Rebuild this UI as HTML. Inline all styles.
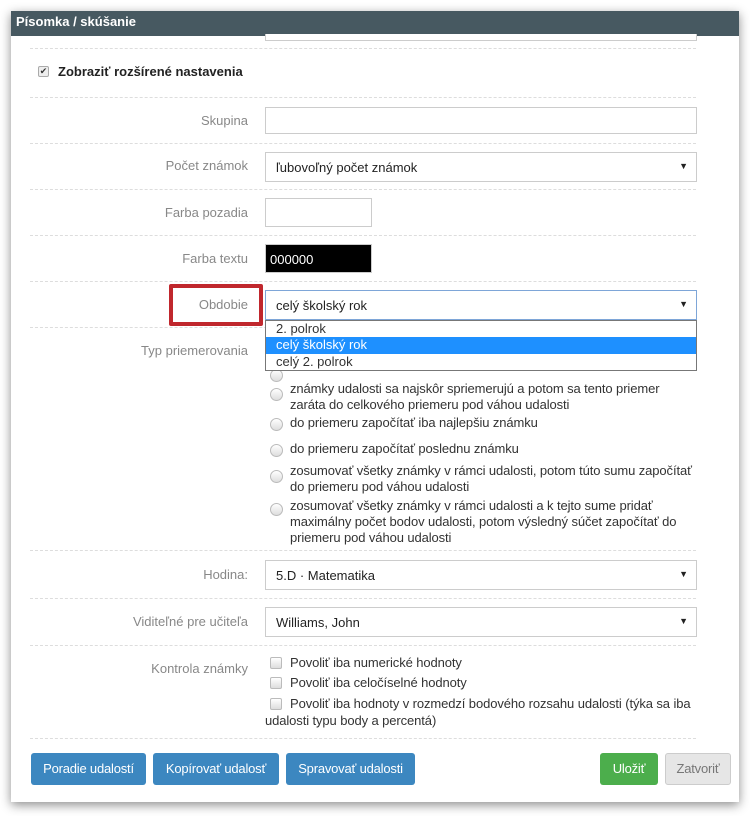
<!DOCTYPE html>
<html><head><meta charset="utf-8"><style>
*{box-sizing:border-box}
body{margin:0;width:750px;height:816px;background:#fff;font-family:"Liberation Sans",Arial,sans-serif;font-size:13px;color:#333;position:relative;overflow:hidden}
.modal{position:absolute;left:11px;top:11px;width:728px;height:791px;background:#fff;box-shadow:0 3px 10px rgba(0,0,0,.45)}
.hdr{position:absolute;left:11px;top:11px;width:728px;height:25px;background:#475961;color:#fff;font-weight:bold;font-size:13px;padding:3px 5px}
.a{position:absolute}
.sep{position:absolute;left:30px;width:666px;border-top:1px dashed #ddd;height:0}
.lbl{position:absolute;right:502px;color:#888;text-align:right;white-space:nowrap}
.in{position:absolute;border:1px solid #ccc;background:#fff}
.sel{position:absolute;left:265px;width:432px;height:30px;border:1px solid #ccc;background:#fff;padding:7px 10px;color:#222}
.sel:after{content:"▼";position:absolute;right:8px;top:8px;font-size:9px}
.rad{position:absolute;left:270px;width:13px;height:13px;border-radius:50%;border:1px solid #bbb;background:linear-gradient(#fff,#ddd)}
.cb{position:absolute;left:270px;width:12px;height:12px;border-radius:2px;border:1px solid #bbb;background:linear-gradient(#fff,#ddd)}
.t{position:absolute;left:290px;color:#333;line-height:16px;white-space:nowrap;letter-spacing:-0.1px}
.btn{position:absolute;top:753px;height:32px;color:#fff;background:#3c87c0;border-radius:3px;text-align:center;line-height:32px;font-size:13px;letter-spacing:-0.2px}
</style></head><body>
<div class="modal"></div>
<div class="hdr">Písomka / skúšanie</div>
<div class="in" style="left:265px;top:34px;width:432px;height:7px;border-top:none"></div>
<div class="sep" style="top:48px"></div>
<div class="a" style="left:38px;top:66px;width:11px;height:11px;border:1px solid #aaa;border-radius:2px;background:#eee;font-size:9px;line-height:9px;text-align:center">✔</div>
<div class="a" style="left:58px;top:64px;font-weight:bold;color:#222">Zobraziť rozšírené nastavenia</div>
<div class="sep" style="top:97px"></div>
<div class="lbl" style="top:113px">Skupina</div>
<div class="in" style="left:265px;top:107px;width:432px;height:27px"></div>
<div class="sep" style="top:143px"></div>
<div class="lbl" style="top:158px">Počet známok</div>
<div class="sel" style="top:152px;height:30px">ľubovoľný počet známok</div>
<div class="sep" style="top:189px"></div>
<div class="lbl" style="top:205px">Farba pozadia</div>
<div class="in" style="left:265px;top:198px;width:107px;height:29px"></div>
<div class="sep" style="top:235px"></div>
<div class="lbl" style="top:251px">Farba textu</div>
<div class="in" style="left:265px;top:244px;width:107px;height:29px;background:#000;color:#fff;padding:7px 4px">000000</div>
<div class="sep" style="top:281px"></div>
<div class="sep" style="top:327px"></div>
<div class="a" style="left:169px;top:284px;width:94px;height:42px;border:4px solid #c0272d;border-radius:2px"></div>
<div class="lbl" style="top:297px">Obdobie</div>
<div class="sel" style="top:290px;border-color:#7ea6d8">celý školský rok</div>
<div class="a" style="left:265px;top:320px;width:432px;height:51px;border:1px solid #777;background:#fff;line-height:16px">
<div style="padding-left:10px;height:16px">2. polrok</div>
<div style="padding-left:10px;height:17px;background:#1e90ff;color:#fff">celý školský rok</div>
<div style="padding-left:10px;height:16px">celý 2. polrok</div>
</div>
<div class="lbl" style="top:343px">Typ priemerovania</div>
<div class="rad" style="top:369px;clip-path:inset(2px 0 0 0)"></div>
<div class="rad" style="top:388px"></div><div class="t" style="top:381px">známky udalosti sa najskôr spriemerujú a potom sa tento priemer<br>zaráta do celkového priemeru pod váhou udalosti</div>
<div class="rad" style="top:418px"></div><div class="t" style="top:415px">do priemeru započítať iba najlepšiu známku</div>
<div class="rad" style="top:444px"></div><div class="t" style="top:441px">do priemeru započítať poslednu známku</div>
<div class="rad" style="top:470px"></div><div class="t" style="top:463px">zosumovať všetky známky v rámci udalosti, potom túto sumu započítať<br>do priemeru pod váhou udalosti</div>
<div class="rad" style="top:503px"></div><div class="t" style="top:498px">zosumovať všetky známky v rámci udalosti a k tejto sume pridať<br>maximálny počet bodov udalosti, potom výsledný súčet započítať do<br>priemeru pod váhou udalosti</div>
<div class="sep" style="top:550px"></div>
<div class="lbl" style="top:567px">Hodina:</div>
<div class="sel" style="top:560px">5.D · Matematika</div>
<div class="sep" style="top:598px"></div>
<div class="lbl" style="top:614px">Viditeľné pre učiteľa</div>
<div class="sel" style="top:607px">Williams, John</div>
<div class="sep" style="top:645px"></div>
<div class="lbl" style="top:661px">Kontrola známky</div>
<div class="cb" style="top:657px"></div><div class="t" style="top:655px">Povoliť iba numerické hodnoty</div>
<div class="cb" style="top:677px"></div><div class="t" style="top:675px">Povoliť iba celočíselné hodnoty</div>
<div class="cb" style="top:698px"></div><div class="t" style="top:696px">Povoliť iba hodnoty v rozmedzí bodového rozsahu udalosti (týka sa iba</div>
<div class="t" style="left:265px;top:713px">udalosti typu body a percentá)</div>
<div class="sep" style="top:738px"></div>
<div class="btn" style="left:31px;width:115px">Poradie udalostí</div>
<div class="btn" style="left:153px;width:126px">Kopírovať udalosť</div>
<div class="btn" style="left:286px;width:129px">Spravovať udalosti</div>
<div class="btn" style="left:600px;width:58px;background:#4cae4c">Uložiť</div>
<div class="btn" style="left:665px;width:66px;background:#e6e6e6;color:#777;border:1px solid #ccc;line-height:30px">Zatvoriť</div>
</body></html>
